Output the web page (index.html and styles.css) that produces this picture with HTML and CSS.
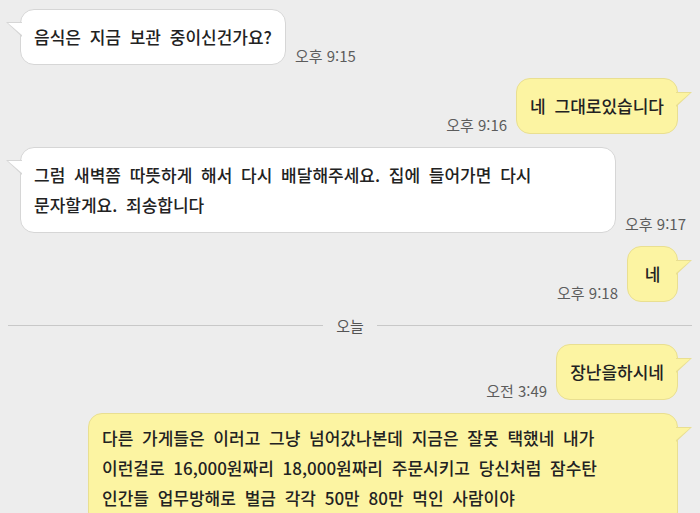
FILE: index.html
```html
<!DOCTYPE html>
<html lang="ko">

<head>
    <meta charset="UTF-8">
    <meta name="viewport" content="width=device-width, initial-scale=1.0">
    <title>채팅</title>
    <link rel="stylesheet" href="styles.css">
</head>

<body>

    <!-- Chat room -->
    <div class="chat">

        <div class="row left">
            <div class="bubble white">음식은 지금 보관 중이신건가요?</div>
            <span class="time">오후 9:15</span>
        </div>

        <div class="row right">
            <span class="time">오후 9:16</span>
            <div class="bubble yellow">네 그대로있습니다</div>
        </div>

        <div class="row left">
            <div class="bubble white bubble-long">그럼 새벽쯤 따뜻하게 해서 다시 배달해주세요. 집에 들어가면 다시<br>문자할게요. 죄송합니다</div>
            <span class="time">오후 9:17</span>
        </div>

        <div class="row right">
            <span class="time">오후 9:18</span>
            <div class="bubble yellow bubble-short">네</div>
        </div>

        <!-- Date divider -->
        <div class="divider">
            <span class="divider-line"></span>
            <span class="divider-text">오늘</span>
            <span class="divider-line"></span>
        </div>

        <div class="row right">
            <span class="time">오전 3:49</span>
            <div class="bubble yellow">장난을하시네</div>
        </div>

        <div class="row right">
            <div class="bubble yellow bubble-wide">다른 가게들은 이러고 그냥 넘어갔나본데 지금은 잘못 택했네 내가<br>이런걸로 16,000원짜리 18,000원짜리 주문시키고 당신처럼 잠수탄<br>인간들 업무방해로 벌금 각각 50만 80만 먹인 사람이야</div>
        </div>

    </div>

</body>

</html>
```

FILE: styles.css
```css
/* Basic Reset */
* {
    margin: 0;
    padding: 0;
    box-sizing: border-box;
}

body {
    font-family: "Noto Sans CJK KR", "Noto Sans", sans-serif;
    background-color: #ededed;
    color: #222;
    overflow: hidden;
}

/* Chat room */
.chat {
    padding-top: 9px;
}

.row {
    display: flex;
    align-items: flex-end;
    gap: 9px;
    margin-bottom: 13px;
}

.row.left {
    padding-left: 20px;
}

.row.right {
    justify-content: flex-end;
    padding-right: 22px;
}

.time {
    font-size: 15px;
    line-height: 18px;
    color: #5c5c5c;
    white-space: nowrap;
}

/* Bubbles */
.bubble {
    position: relative;
    font-size: 17px;
    font-weight: 500;
    word-spacing: 4px;
    line-height: 30px;
    padding: 12px 13px;
    border-radius: 14px;
    border: 1px solid #d9d9d9;
    white-space: nowrap;
}

.bubble::before,
.bubble::after {
    content: "";
    position: absolute;
    clip-path: polygon(0 0, 100% 0, 100% 100%);
}

.white {
    background-color: #fff;
    border-color: #d6d6d6;
}

.white::before {
    left: -15px;
    top: 12px;
    width: 16px;
    height: 15px;
    background-color: #d6d6d6;
}

.white::after {
    left: -13px;
    top: 13px;
    width: 15px;
    height: 13px;
    background-color: #fff;
}

.yellow {
    background-color: #fcf4a2;
    border-color: #e9df91;
}

.yellow::before,
.yellow::after {
    clip-path: polygon(0 0, 100% 0, 0 100%);
}

.yellow::before {
    right: -15px;
    top: 13px;
    width: 16px;
    height: 15px;
    background-color: #e9df91;
}

.yellow::after {
    right: -13px;
    top: 14px;
    width: 15px;
    height: 13px;
    background-color: #fcf4a2;
}

.bubble-long {
    width: 596px;
}

.bubble-short {
    width: 51px;
    text-align: center;
    padding-left: 0;
    padding-right: 0;
}

.bubble-wide {
    width: 590px;
    padding-top: 9px;
}

/* Date divider */
.divider {
    display: flex;
    align-items: center;
    gap: 13px;
    height: 20px;
    padding: 0 8px;
    margin-top: 3px;
    margin-bottom: 9px;
}

.divider-line {
    flex: 1;
    height: 1px;
    background-color: #c8c8c8;
}

.divider-text {
    font-size: 15px;
    color: #555;
}
```
